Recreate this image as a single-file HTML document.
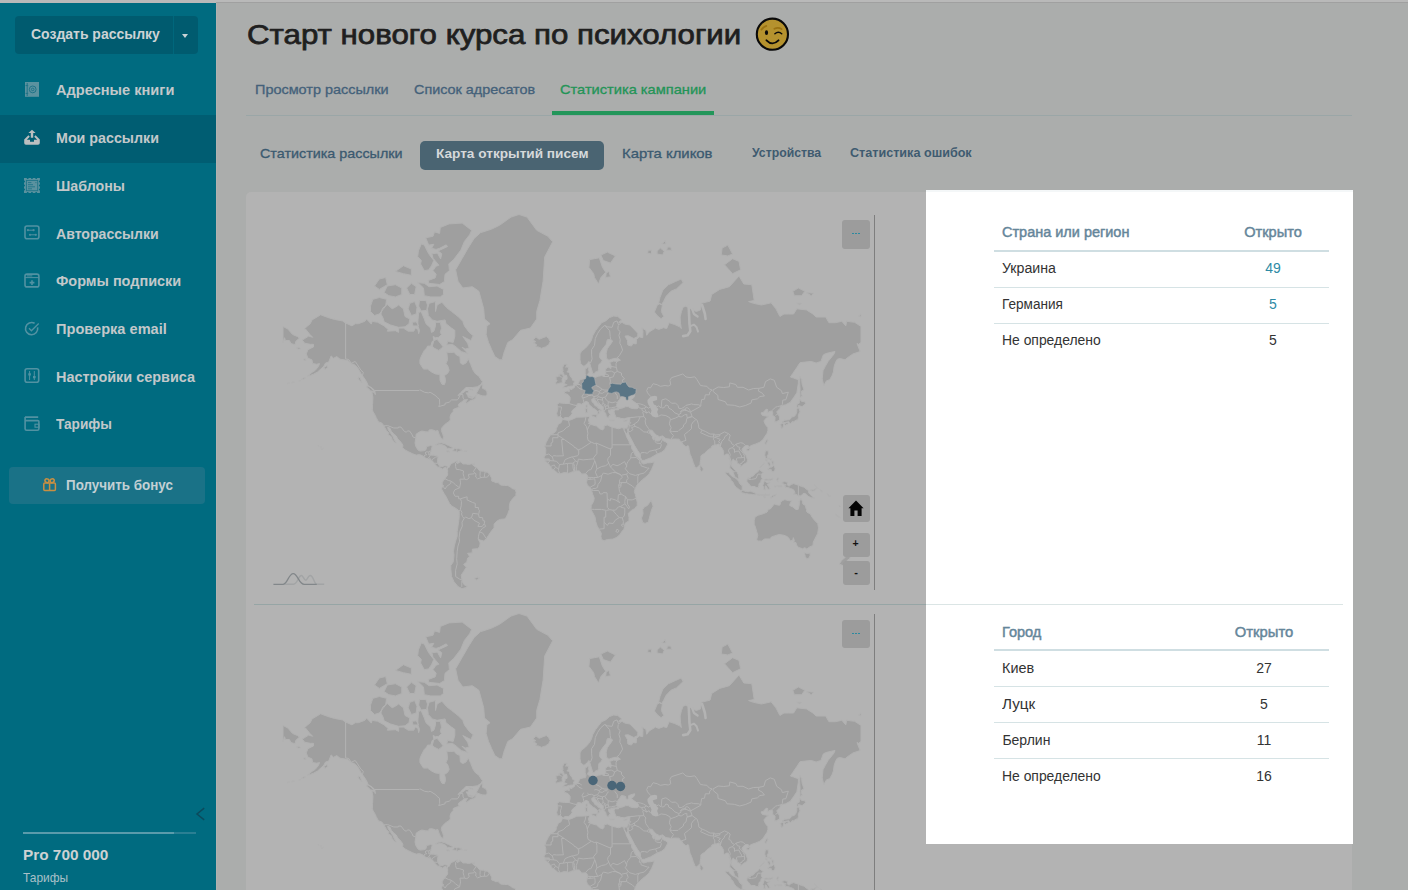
<!DOCTYPE html>
<html lang="ru">
<head>
<meta charset="utf-8">
<title>Старт нового курса по психологии</title>
<style>
*{box-sizing:border-box;margin:0;padding:0}
html,body{width:1408px;height:890px;overflow:hidden}
body{background:#abadac;font-family:"Liberation Sans",sans-serif;position:relative;color:#222}
.abs{position:absolute;white-space:nowrap}
.t{position:absolute;white-space:nowrap;line-height:1;transform-origin:0 50%}
.b{font-weight:bold}
#topstrip{left:0;top:0;width:1408px;height:3px;background:#b9b9b9}
#topline{left:216px;top:2px;width:1192px;height:1px;background:#a0a0a0}
#side{left:0;top:3px;width:216px;height:887px;background:#006b80}
#create{left:15px;top:16px;width:183px;height:38px;background:#005b6f;border-radius:4px}
#create .sep{position:absolute;left:158px;top:0;width:1px;height:38px;background:#00677c}
#create .caret{position:absolute;left:167px;top:18px;width:0;height:0;border-left:3.5px solid transparent;border-right:3.5px solid transparent;border-top:4px solid #c9d3d6}
.act{left:0;top:115px;width:216px;height:48px;background:#005d72}
.ml{font-weight:bold;font-size:15px;color:#c3c8ca;left:56px}
.ic{position:absolute;left:23px;width:18px;height:18px;overflow:visible}
#bonus{left:9px;top:467px;width:196px;height:37px;background:#1a7287;border-radius:4px}
#card{left:246px;top:192px;width:1106px;height:710px;background:#b3b3b3;border-radius:5px}
#white{left:926px;top:190px;width:427px;height:654px;background:#fff;border-top:2px solid #f4f7f8}
.hl{position:absolute;height:1px;background:#d6e3e5}
.th{color:#65869a;font-size:14px;-webkit-text-stroke:.45px #65869a}
.td{color:#333;font-size:14px}
.num{position:absolute;white-space:nowrap;line-height:1;font-size:14px;transform:translate(-50%,0)}
.mbtn{position:absolute;background:#9c9c9c;border-radius:3px}
.tab{font-size:13px;color:#44617a;-webkit-text-stroke:.3px #44617a}
.sub{font-size:13px;color:#3b5a70;-webkit-text-stroke:.3px #3b5a70}
.sub2{font-size:12.5px;font-weight:bold;color:#3f5b70}
</style>
</head>
<body>
<div id="side" class="abs"></div>
<div id="topstrip" class="abs"></div><div id="topline" class="abs"></div><div class="abs" style="left:216px;top:3px;width:1px;height:887px;background:#b0b2b1"></div>

<!-- sidebar -->
<div id="create" class="abs"><div class="sep"></div><div class="caret"></div></div>
<span class="t b" style="left:30.5px;top:26px;font-size:15px;color:#cdd3d5;transform:scaleX(.932)">Создать рассылку</span>
<div class="abs act"></div>
<div id="bonus" class="abs"></div>
<span class="t ml" style="top:81.5px;transform:scaleX(.973)">Адресные книги</span>
<span class="t ml" style="top:129.5px;transform:scaleX(.951)">Мои рассылки</span>
<span class="t ml" style="top:177.5px;transform:scaleX(.949)">Шаблоны</span>
<span class="t ml" style="top:225.5px;transform:scaleX(.939)">Авторассылки</span>
<span class="t ml" style="top:272.5px;transform:scaleX(.964)">Формы подписки</span>
<span class="t ml" style="top:320.5px;transform:scaleX(.972)">Проверка email</span>
<span class="t ml" style="top:368.5px;transform:scaleX(.963)">Настройки сервиса</span>
<span class="t ml" style="top:415.5px;transform:scaleX(.909)">Тарифы</span>
<svg class="abs" style="left:0;top:0" width="216" height="520" viewBox="0 0 216 520">
<!-- address book -->
<rect x="25" y="82" width="14" height="14.8" fill="#5b929f"/>
<g fill="none" stroke="#1f7488" stroke-width="1"><circle cx="32.7" cy="89.4" r="3.4"/><circle cx="32.7" cy="89.4" r="1.3"/><path d="M27.2 83v13M25.6 85.6h2.6M25.6 93.4h2.6"/></g>
<!-- upload tray -->
<path fill="#bcbfc0" d="M24.2 139.4 28.4 135.3 29.8 136.7 26.8 139.8H30V141.8H34V139.8H37.2L34.2 136.7 35.6 135.3 39.8 139.4V143Q39.8 144.8 38 144.8H26Q24.2 144.8 24.2 143ZM32 129.8 35.6 133.1H33.2V137.8H30.8V133.1H28.4Z"/>
<!-- template stamp -->
<path fill="#5b929f" d="M24 178.1h2.7a1 1 0 0 0 2 0h2.25a1 1 0 0 0 2 0h2.25a1 1 0 0 0 2 0h2.7v2.5a1 1 0 0 0 0 2v1.9a1 1 0 0 0 0 2v1.9a1 1 0 0 0 0 2v2.5h-2.7a1 1 0 0 0-2 0h-2.25a1 1 0 0 0-2 0h-2.25a1 1 0 0 0-2 0H24v-2.5a1 1 0 0 0 0-2v-1.9a1 1 0 0 0 0-2v-1.9a1 1 0 0 0 0-2z"/>
<g fill="none" stroke="#1f7488" stroke-width=".9"><rect x="26.4" y="180.4" width="11.3" height="10.3"/><path d="M28 182.6h3.4M35.4 182.6h1M28 184.7h5M28 186.8h7M28 188.8h4"/></g>
<g fill="none" stroke="#5292a2" stroke-width="1.6">
<!-- auto -->
<rect x="25" y="226" width="13.9" height="12.8" rx="2"/>
<path stroke-width="1" d="M28.3 230.2h5M30.4 234.8h5"/><g fill="#4f8d9d" stroke="none"><circle cx="27.9" cy="230.2" r="1.1"/><circle cx="33.6" cy="230.2" r="1.1"/><circle cx="30" cy="234.8" r="1.1"/><circle cx="35.8" cy="234.8" r="1.1"/></g>
<!-- forms -->
<rect x="25" y="274.1" width="13.9" height="12.8" rx="2"/><path stroke-width="1" d="M25 277.6h14M26.8 275.9h5.5"/><path stroke-width="1.6" d="M32 280.2v4.8M29.6 282.6h4.8"/>
<!-- check -->
<path d="M37.6 327.4A6.1 6.1 0 1 1 34.6 323.3"/><path stroke-width="1.3" d="M29 328.2l2.4 2.5 7.3-7.2"/>
<!-- settings -->
<rect x="25.1" y="368.7" width="13.6" height="13.5" rx="2"/><path stroke-width="1" d="M29.6 371v9M34.3 371v9"/><path stroke-width="2.6" d="M29.6 373.2v2.2M34.3 376v2.2"/>
<!-- wallet -->
<path d="M25 417.1h13.2M25.1 417v11.8a1.5 1.5 0 0 0 1.5 1.5h10.800000000000001a1.5 1.5 0 0 0 1.5-1.5v-7.200000000000003a1 1 0 0 0-1-1H25.1"/><rect x="35" y="424.2" width="4" height="3" stroke-width="1.1"/>
</g>
<!-- gift -->
<g fill="none" stroke="#c98f42" stroke-width="1.5"><rect x="43.8" y="483.1" width="11.6" height="7.3" rx="1"/><path d="M49.6 483.2v7.2"/><ellipse cx="47" cy="480.7" rx="2.1" ry="1.8" transform="rotate(35 47 480.7)"/><ellipse cx="52.2" cy="480.7" rx="2.1" ry="1.8" transform="rotate(-35 52.2 480.7)"/></g>
</svg>

<span class="t b" style="left:65.6px;top:478px;font-size:14px;color:#c3d0d4;transform:scaleX(.957)">Получить бонус</span>

<div class="abs" style="left:23px;top:832px;width:173px;height:2px;background:#2a7f93"></div>
<div class="abs" style="left:23px;top:832px;width:151px;height:2px;background:#5a9bab"></div>
<span class="t b" style="left:23px;top:846.5px;font-size:15px;color:#cdd2d3;transform:scaleX(1.023)">Pro 700 000</span>
<span class="t" style="left:23px;top:871px;font-size:13px;color:#a9c0c8;transform:scaleX(.917)">Тарифы</span>
<svg class="abs" style="left:194px;top:806px" width="14" height="16" viewBox="0 0 14 16"><path d="M10.2 2.2 3 8l7.2 5.8" fill="none" stroke="#0b4a5c" stroke-width="1.5"/></svg>

<!-- main header -->
<span class="t" id="title" style="left:247.4px;top:20.8px;font-size:28px;color:#1f1f1f;-webkit-text-stroke:.75px #1f1f1f;transform:scaleX(1.116)">Старт нового курса по психологии</span>
<svg class="abs" style="left:754px;top:16px" width="38" height="38" viewBox="754 16 38 38"><circle cx="772.4" cy="34.2" r="15.6" fill="#b5922e" stroke="#0a0a0a" stroke-width="2.1"/><ellipse cx="766.5" cy="32.7" rx="1.6" ry="2.4" fill="#0a0a0a"/><g fill="none" stroke-linecap="round"><path d="M761.4 29.6Q763.6 26.8 766.4 25.9M774.4 28.8Q778.1 26.6 781.7 29.1" stroke="#9a7212" stroke-width="1.7"/><path d="M774.9 33.8Q778.4 30.6 781.7 33.8" stroke="#0a0a0a" stroke-width="1.5"/><path d="M766.5 40.3Q772.4 46.4 778.5 40.3" stroke="#0a0a0a" stroke-width="1.9"/></g></svg>

<span class="t tab" style="left:254.9px;top:82.7px;transform:scaleX(1.111)">Просмотр рассылки</span>
<span class="t tab" style="left:413.7px;top:82.7px;transform:scaleX(1.106)">Список адресатов</span>
<span class="t tab" style="left:560px;top:82.7px;color:#239457;-webkit-text-stroke:.3px #239457;transform:scaleX(1.125)">Статистика кампании</span>
<div class="abs" style="left:246px;top:115px;width:1106px;height:1px;background:#9aa6a7"></div>
<div class="abs" style="left:552px;top:111px;width:162px;height:4px;background:#23965a"></div>

<span class="t sub" style="left:259.9px;top:147.1px;transform:scaleX(1.103)">Статистика рассылки</span>
<div class="abs" style="left:420px;top:141px;width:184px;height:29px;background:#4a6472;border-radius:5px"></div>
<span class="t b" style="left:435.8px;top:147.3px;font-size:13px;color:#d6d9db;transform:scaleX(1.048)">Карта открытий писем</span>
<span class="t sub" style="left:621.6px;top:147.1px;transform:scaleX(1.145)">Карта кликов</span>
<span class="t sub2" style="left:752.3px;top:146.5px;transform:scaleX(.98)">Устройства</span>
<span class="t sub2" style="left:850.4px;top:146.5px;transform:scaleX(1.008)">Статистика ошибок</span>

<!-- card -->
<div id="card" class="abs"></div>
<div id="white" class="abs"></div>

<!-- MAPS -->
<svg width="0" height="0" style="position:absolute"><defs><g id="world"><path fill="#9f9f9f" stroke="#b1b1b1" stroke-width="1" stroke-linejoin="round" d="M48.2,126.1 54.7,122.1 58.7,123.3 55.5,120.1 51.5,115 50.2,114.8 56.3,109.7 58,105.9 66.7,100.8 73.9,103.5 80.4,105.4 88.4,106.9 91.6,109 98,111.9 101.2,109.7 104.4,109.7 110.9,107.3 112.5,105 117.3,110.1 118.1,107.3 123.7,108.3 130.1,111.9 134.1,115.4 133.3,117.2 141.4,116.7 144.6,118.4 144.6,114.1 149.4,114.1 154.2,117.2 159.8,117.2 161.4,114.1 163.9,115.4 164.7,119.7 165.5,116.3 163.9,111.9 163.9,107.3 164.7,98.5 167.1,97.5 170.3,105 171.9,109.7 174.3,111.9 176.7,114.1 177.5,118.4 179.9,117.2 181.5,111.9 181.5,108.3 186.3,108.3 187.5,114.1 186.3,118.4 187.5,120.5 184.7,123.3 181.5,123.7 179.1,122.5 179.9,126.5 178.3,127.3 176.7,132.1 173.5,132.1 172.7,134 170.3,136.4 167.1,142.6 165.9,145.8 165.9,149.6 169.5,155.1 173.5,155.1 177.5,158 181.5,160 185.9,160.5 186,166.3 187.9,170.2 190.3,170.7 191.5,167.6 191.1,163.6 190.3,161.6 193.6,159.4 195.2,156.5 193.9,152.1 192,149.6 193.6,145.8 192.8,138.2 196.8,138.5 200,138.2 202.4,140.9 205.9,142.6 206.4,149 208.8,150.6 212,149 214.4,144.9 216.8,150.6 219.2,156.5 221.7,160 224.9,162.2 226.5,164.9 228.4,167.6 227.3,170.2 223.3,172.8 218.4,173.5 212,173.5 209.6,175.8 206.4,178.9 204,181.5 207.2,180.1 212,176.5 214.4,176.5 214.4,178.9 212,178.9 213.6,181.3 214.4,183.2 216.8,184.1 219.2,184.3 221.7,181.8 221.7,184.1 219.7,185.5 216,186.8 212.8,189.3 211.7,188.2 213.6,185.5 210.4,185.9 207.2,188.2 204.8,189.9 204.3,191.9 205.6,193.2 203.2,193.8 199.2,195.5 199.2,197.4 197.1,199.9 196,203 196.4,206 194.4,207.9 191.1,210.2 187.9,213.7 187.3,216.5 188.7,220.1 189.5,222.8 189.1,225.2 187.6,225 186.3,222.8 185,220.1 183.9,216.5 181.5,217 178.3,215.7 175.1,215.9 174.6,217.9 171.9,217.8 167.9,217 165.5,217.9 162.2,220.1 161.8,223.7 161,229 161.8,232.5 163.9,235.9 165.9,237.1 169.5,236.8 171.9,235.9 172.7,232.5 176.7,231.5 178.3,232 177.5,235.1 176.7,237.6 175.9,241 179.9,241.3 183.1,241.8 184.2,242.6 183.4,246.8 183.8,249.2 185.5,252 187.9,252.8 190.3,251.7 192.8,252 193.9,253.3 193.1,254.9 192,253.3 189.5,254.1 188.7,255.2 186.3,253.8 183.9,253.3 181.5,250.9 179.9,248.7 177.5,245.9 175.1,245.1 171.9,244.3 168.7,241.8 165.5,240.6 162.2,241.1 158.2,239.6 154.2,237.6 151,235.9 148.6,233.7 148.9,231.1 147,228.2 143.8,225 142.2,221.9 139.8,220.1 137.4,217.4 135.8,214 133.7,213.1 134.1,215.5 136.6,219.2 139,222.8 140.6,226.4 142.2,228.7 141.1,229 138.2,225.5 137.4,222.8 134.1,220.5 134.9,219.2 132.5,216.5 130.9,213.7 129.8,211.6 127.7,208.9 124.5,207.9 122.1,203.4 121.3,201.4 119.2,197.9 118.4,195.8 118.6,190.4 118.9,183.2 117.8,177.9 120.5,178.4 121.3,180.6 120.8,176.5 118.1,174 114.1,171.5 112.5,167.6 109.3,162.8 106.9,159.4 103.6,153.6 100.4,150.6 97.2,149.6 94,146.5 90,145.8 86,145.2 82.8,142.6 79.6,144.2 77.1,141.9 74.7,148.1 71.5,149 69.9,152.1 66.7,155.1 63.5,158 59.5,160.2 56.3,161.4 53.4,162.2 57.9,158.5 61.1,156.5 64.3,152.7 65.6,149.6 62.7,150.2 58.7,149.6 57.9,145.8 53.9,144.2 52.3,139.9 53.9,135.7 59.5,132.9 59.5,130.3 56.3,130.3 50.7,129.2ZM201.6,55.8 208,44.7 214.1,34.1 220.1,24.5 226.5,18.7 237.7,15.1 245.7,11.2 257,3.1 265,0.5 273,3.1 282.7,16.3 293.9,22.3 298.7,27.8 290.7,42.9 289.1,67.2 285.9,86.5 282.7,97.5 282.7,105 276.3,114.1 266.6,116.3 258.6,125.7 253.8,128.4 249.8,139.2 248.2,145.8 245.7,145.8 240.9,142.6 237.7,135.7 234.5,128.4 232.1,120.5 232.9,111.9 236.1,109.7 230.5,105 229.7,94.8 224.9,77.3 218.4,72.7 208.8,74 204,67.2ZM213.6,139.6 207.2,137.5 202.4,133.2 198.4,130.3 192.8,131 193.6,127.3 199.2,128.4 200.8,122.5 200.8,116.3 197.6,114.1 192,109.7 191.1,105.9 183.1,107.3 178.3,105.9 174.3,101.5 173.5,94.8 175.1,89.3 181.5,87.6 181.5,97.5 183.1,91 187.9,88.2 192.8,93.8 197.6,97.5 204,102.5 208.8,107.3 210.4,111.9 215.2,118.4 219.2,121.7 216.8,126.5 212.8,124.5 208.8,122.5 213.6,129.2 215.2,134 211.2,135 208,133.2 212,137.5ZM130.1,107.8 136.6,111 144.6,113.3 151,112.8 155,109.7 155.8,105 151,102.5 149.4,94.8 144.6,91 141.4,93.2 138.2,94.8 133.3,90.5 128.5,94.3 126.9,100 129.3,104.5ZM116.5,97.5 120.5,101.5 125.3,100 131.7,92.1 132.5,85.3 125.3,83.5 118.9,85.3 116.5,92.1ZM189.5,80.5 186.3,82.9 176.7,82.9 170.3,81.7 169.5,74 163.9,68.6 170.3,69.3 175.1,72.7 183.1,72 189.5,75.4ZM147.8,80.5 141.4,82.9 134.9,81.7 130.1,78.6 133.3,72 141.4,70.7 147.8,74ZM160.6,80.5 155.8,80.5 152.6,74 157.4,69.3 162.2,72.7ZM162.2,100 157.4,101.5 154.2,94.8 155.8,89.3 160.6,87.6 163,93.2ZM172.7,96.4 167.1,96.9 164.7,92.1 165.5,86.5 171.9,86.5 173.5,91ZM164.7,111.9 159,111.9 158.2,108.3 162.2,107.8ZM189.2,132.9 184.7,136.4 179.9,134 178.3,132.1 179.9,126.5 183.1,125.3 186.3,129.2ZM133.3,70.7 125.3,75.4 120.5,72 125.3,65 131.7,63.5ZM157.4,61.3 149.4,59.7 141.4,57.4 149.4,51.7 157.4,55ZM222.8,179.9 228.1,181.8 231.3,182 233.2,180.6 232.9,177.7 231.3,175.5 228.4,174.3 228.9,170.2 226.5,171.5 224.4,175.8 222.8,178.4ZM120,177.9 116.5,176.7 112,172.5 114.1,172 117.3,174 119.2,176.5ZM107.7,168.9 104.4,164.9 104.8,163.3 106.4,164.1ZM181.5,231.1 184.7,229.2 187.9,228.9 191.1,229.9 194.4,231.5 197.6,233 198.9,233.9 196.8,234.4 193.2,234.4 192,232.5 188.7,230.8 186.3,230.3 183.1,231.1ZM198.5,236.9 200.8,234.4 204,234.6 207.2,235.4 208.2,236.6 205.6,237.1 203.2,238.1 201.6,237.3ZM192.3,237.1 194.4,236.8 195.6,237.6 193.6,237.9ZM210.1,236.9 212.5,236.9 212.3,237.6 210.1,237.6ZM69.9,153.6 73.1,151.5 73.6,153.6 71,155.4ZM42.3,134 45,133.2 47,135 44.2,135ZM49.4,145.2 51.5,144.9 51.9,146.2 50.2,146.5ZM214.4,174.3 218.4,175.5 218.9,176.2 216,175.8ZM214.8,182 218.4,182.7 217.6,183.6 215.2,182.9ZM51.5,164.1 49,165.5 47.4,165.5 49.8,163.8ZM46.6,166.8 45,167.1 45.8,166ZM40.2,168.4 37.8,168.7 38.6,167.9ZM35.4,169.4 33,169.7 34.1,168.9ZM193.9,253.3 194.7,254.1 196.8,250 198.4,249.2 201.6,247.6 203.2,246.9 203.2,249.2 203.2,249.6 205.6,248.4 205.6,247.3 208,248.9 208.8,250 212,249.9 214.4,250.5 218.4,249.7 218.8,250.9 220.4,252.5 221.7,253.3 223.3,254.1 225.7,256.9 229.7,257.3 233.7,258.5 235.3,259.9 237.7,264.1 237.7,267 240.1,267.8 240.9,268.6 244.1,268.6 246.5,271 250.6,271.5 253.8,271.5 256.2,272.9 258.6,274.7 261.3,275.5 262.1,278.3 261.8,281.5 258.6,284.8 256.2,288.1 255.4,291.4 255.4,295.5 253.8,299.8 252.2,303.2 250.6,305 246.5,305.3 243.3,306.7 240.1,309.9 240,313.9 237.7,316.6 234.5,321.3 232.1,325.1 229.7,326.9 226.5,326.1 224.2,325.1 226.2,329 225.5,333.1 223.3,334.7 218.4,335.1 218.1,338.9 213.6,339.3 215.6,342.5 213.6,344.1 212.8,348.1 209.6,350.4 212.3,353.2 209.6,357.5 207.2,361.2 208,365.9 208.3,367.7 210.4,371 213.3,372.4 211.2,373.8 208,374.6 204,372.6 200,367.7 197.6,362.5 196.8,355.1 196.8,351.5 199.2,348.1 200,341.4 199.5,337.2 200.3,332 201.6,327.1 203.2,322.2 203.2,317.5 204,312.1 204.8,306.7 205.3,301.5 205.1,296.9 202.4,294.7 197.6,291.9 195.5,289.4 194,286.4 192.3,283.1 190.3,279.9 188.7,277.1 187.5,275 187.9,273.4 189.5,272.3 189.1,271 188.1,270.5 188.3,268.6 189.5,266.2 191.1,264.9 192,263 193.6,261.4 193.6,258.2 193.6,255.7 193.1,254.9ZM220.1,364.6 223.3,363.3 225.2,364.3 222.5,365.9ZM218.6,250.7 220.1,249.6 220.2,250.7ZM308.5,205.4 314.8,206.5 318,205.4 322.8,203.2 330.8,203 334.1,202.4 335.7,203 334.4,206 335.3,208.9 334.4,209.5 336.5,210.4 338.9,211 342.6,212.1 345.3,214.6 348.5,215.9 350.1,214.6 350.1,211.8 353.3,211 358.1,213.3 361.4,214 364.6,214.8 367.8,213.7 369.9,214.2 370.2,216.5 371.8,220.1 372.6,222.8 375,227.3 375.3,229 377.4,231.6 377.9,235.1 379.8,237.6 381.4,241.8 383.8,243.5 387,246.4 387.5,248.4 389.5,250 393.5,248.9 396.7,248.7 400.2,247.9 399.9,250 397.5,255.7 395.1,259.8 391.9,263 388.7,265.4 385.4,268.6 383,271 381.4,274.2 380.3,277.5 381.4,280.7 382.2,284 383.2,288.1 383.2,291.4 380.6,294.7 377.4,296.4 374.2,299.4 375,303.2 375,306.7 371,309.4 370.7,312.1 369.9,315.3 367.8,317.5 366.2,320.3 363,323.2 358.9,325.1 353.3,325.5 350.1,326.7 347.5,325.5 346.9,322.2 347.4,319.4 345.3,315.7 343.2,312.1 341.8,307.6 341.1,303.2 338.9,298.9 336.9,295.5 337.3,291.4 339.7,287.2 340.2,284 338.9,280.7 337.6,276.7 336.9,274.2 333.3,271 332.5,268.1 333.3,265.4 333.7,262.2 332.1,259.8 329.2,259.9 327.6,260.1 326,257.7 325.2,256.9 322,256.9 319.6,257.5 316.4,258.6 314.8,259.3 313.2,258.8 310,258.6 306,259.9 303.5,259 300.3,256.2 297.9,254.9 296.6,252.5 294.7,250 293.9,249.2 291.2,247.1 291,245.1 289.9,243.1 291.5,241 291.8,237.6 291.8,235.1 290.7,232.5 292.3,228.2 294.2,224.6 296.3,221 298.7,219.8 301.9,217.4 302.4,214.6 304.4,210.2 307.1,208.7ZM397.2,286.4 399.1,292.2 398,294.7 396.7,298.9 394.3,308.1 391.1,309.4 388.7,308.5 387.5,304.1 389.1,299.8 388.7,295.5 390.3,293 393.5,291.4 395.9,288.1ZM303.5,203 302.7,199.5 303.9,194.7 303.2,190.4 305.2,188.8 310.8,189.5 315.1,189.5 316.1,185.9 316.1,183.2 314,180.6 310.8,179.4 310.3,177.7 313.2,177 315.4,177.5 315.1,174.8 318,175.5 318.3,174.8 320.4,173.5 320.9,171.5 323.6,170.5 325.2,167.6 326,165.7 329.2,164.9 331.6,164.7 332.1,162.2 331.2,159.4 331.2,155.1 333.7,153.6 335,153 334.5,156.5 335.3,158 333.7,160.2 333.7,161.4 335.7,162.8 338.1,162.5 340.5,163.6 344.5,162.2 347.7,161.6 349.8,162.5 351.7,160 351.7,155.1 354.1,153 357,154.5 357,151.2 355.7,148.4 359.7,147.1 363,147.4 366.5,146.2 363.8,144.2 359.7,144.5 354.9,146.2 352.5,144.2 352.2,139.2 353.3,134.7 357.3,129.2 358.6,126.9 356.5,125.3 353.3,125.7 352.2,130.3 348.5,135 345.8,139.2 345.6,143.6 348.2,146.5 346.9,149 344.8,150.6 344.5,155.7 343.7,157.4 341.3,158 340.8,159.7 338.9,159.7 338.1,157.1 336.5,152.1 335.7,149 334.9,147.4 333.3,149.6 330.8,151.8 329.2,152.1 326.8,149.6 326,145.8 326,139.9 327.6,137.1 331.6,134 334.9,130.3 337.3,126.5 338.9,121.3 341.8,116.3 344.5,112.8 347.7,108.7 351.7,106.9 355.7,103.5 359.7,102 363.8,102.5 367.8,105.9 364.6,108.3 368.6,108.7 371,110.1 375.8,111 379.8,115 383.8,119.3 383.8,122.5 379.8,124.5 374.2,121.7 371,122.1 373.4,126.5 373.9,131 377.4,132.1 379,129.5 382.2,129.9 382.5,125.3 385.4,122.9 388.7,123.7 389,117.2 387.8,114.1 391.9,116.3 392.7,121.3 395.1,118 401.5,114.1 404.7,115.4 409.5,113.7 412.7,114.6 415.1,108.7 420.8,110.6 425.6,112.8 427.3,114.6 426.5,109.2 426.1,103 427.5,97.5 429.1,93.2 431.4,92.4 434.4,93.2 438.4,95.9 442.4,97.5 446.5,95.9 447.3,89.3 456.1,87.1 457.7,80.5 465.7,75.4 475.4,72.7 485,62 489.8,70 497.8,70.7 500.2,86.5 494.6,87.6 499.4,89.3 507.5,91 517.1,88.8 521.9,94.8 525.9,102.5 530,100 534.8,100 539.6,100 542.8,94.8 552.4,95.9 558.9,100 562.1,103 571.7,103 574.9,108.7 581.3,108.7 587.8,107.3 591.8,111.9 592.6,107.3 600.6,108.3 607,112.4 607,128.4 604.6,130.3 603,129.5 605.4,135.7 606.2,137.5 599,139.9 594.2,143.2 591,145.8 586.2,144.5 583.3,145.2 581.7,148.1 580.2,152.1 579.4,158 578.1,161.4 575.7,165.7 572.5,166.8 569.8,171.5 568.2,164.9 569,156.8 571.4,152.1 574.3,147.1 577.8,142.9 580.1,139.9 581,137.5 577.3,138.2 571.7,139.6 569.3,140.9 566.9,147.4 562.1,149 557.2,147.4 550.8,148.1 546,148.7 542.8,153.6 538.8,159.4 536.4,163 539.6,164.1 544.4,165.7 544.4,168.9 543.6,174 542.8,178.9 539.6,183.6 536.4,188.2 531.6,190.8 528.3,191.5 526.7,191.9 525.9,194.7 523.5,196.8 522.7,197.9 525.6,203 525.6,206 522.7,207.5 520.8,207.9 521.1,203 518.7,201.4 518.7,197.9 517.6,196.8 514.7,197.9 513.1,198.9 513.9,195.8 512.3,195.1 509.1,198.5 507,198.9 508.3,201.4 511.5,202 514.7,202.4 512.3,204 509.9,206.9 511.5,210.8 513.9,213.7 513.9,216.5 513.1,219.2 510.7,222.8 509.1,225.5 505.9,228.2 501.9,229.9 497,231.6 494.6,233.7 494.3,231.6 491.4,231.6 489,233.7 487.9,235.9 489.8,239.3 492.2,241.8 493.5,245.9 493,248.4 489.8,250.2 486.6,252.8 486.6,250.9 483.4,249.2 482.6,247.3 480.2,246.4 479.4,245.1 478.6,245.6 477.4,249.2 477.4,252 479.1,254.1 481,256.1 483.1,258.2 484.2,260.6 485,264.6 483.9,264.9 480.7,262.5 479.4,259 478.6,256.5 475.8,254.1 476.2,250.9 476.5,247.6 475.4,244.3 474.6,240.1 472.1,240.1 471,241.3 469.4,241 469.7,237.6 468.1,234.2 466.2,232.5 464.9,229.9 462.5,230.8 459.3,231.3 457.7,232.2 457.2,233.9 454.5,235.4 450.5,239.3 446.9,241.8 446.8,245.1 446.1,248.4 446.1,250.4 444.9,252 443.6,252.8 442.4,254.1 440.8,252.5 439.2,248.4 437.6,243.5 436,240.1 435.2,235.9 434.7,232.5 434.1,231.6 432,232.8 428.8,230.3 428,228.2 426.4,227.3 425.1,225.2 420.8,225 416.8,225.3 411.9,224.6 409.8,222.8 408.7,221.9 405.5,222.7 402.3,221 399.9,218.7 398.3,216.5 396.4,215.9 395.1,217.4 395.9,219.2 398.3,222.5 398.6,224.6 399.9,226.2 400.7,223.7 401,226.4 403.1,227.1 405.5,226.8 407.9,223.7 408.6,223.2 408.7,226.4 411.9,228 414,229.9 411.9,233.4 410.6,235.9 407.1,238.5 403.1,240 396.7,243.8 390.3,246.3 387.8,246.4 386.6,243.5 386.2,240.1 383.8,236.8 380.6,231.6 378.2,226.8 375,221 373.9,217.4 373.1,220.5 370.3,216.6 369.9,214.2 372.9,214 374.2,211.2 375.5,207.9 375.8,205 376.1,203.6 373.4,203.8 370.2,204.8 367,204.4 364.6,203.6 362.2,203.4 360.6,199.9 360.1,197.9 360.1,196.8 361.4,195.8 364.6,195.8 364.9,194.5 367.8,194.3 371.8,192.6 374.2,192.6 376.6,194.1 379.8,194.7 383,194.7 384.6,193.6 384.6,191.5 382.2,189.3 379,187 377.4,185.5 379.8,183.6 380.9,180.8 378.2,181.3 374.5,182.7 374.4,185.2 373.1,186.6 371.8,185.2 371.8,183.6 369.4,182.7 367.3,182.5 365.7,185.2 364.2,187 363,189.7 362.5,191.5 363.3,193.6 364.6,194.3 362.2,194.7 360.1,195.3 357.3,194.9 356.2,196.2 354.6,195.8 354.6,197.9 355.3,199.3 356.5,200.9 354.9,202 354.9,204 353.3,203.4 352.2,201.4 351.7,199.3 350.4,197.9 349.3,195.8 349.3,193 347.7,191.5 343.7,189.3 342.1,187 341,185.5 340,186.1 340,184.3 337.8,185.2 337.9,187.7 339.8,189.3 340.8,191.5 343.7,192.8 343.7,193.8 346.9,195.5 347.7,196.6 346.9,197 345.3,196 344.7,197.4 345.5,198.9 344.5,199.9 343.2,200.9 343.5,199.7 343.7,197.9 343,196.8 341.3,195.3 338.9,194.1 336.5,191.7 334.9,190.4 334.4,188.4 332.1,187.3 330,188.6 327.6,190.2 325.2,189.5 323.1,189.9 323.1,191.9 321.2,194.1 318.8,195.8 317.5,197.9 318.3,199.3 316.9,201.4 314.8,203.4 310.8,203.6 309.2,205 307.9,204 306.8,202.6ZM29,112.4 33.8,115 38.6,120.5 43.4,122.5 45.5,124.1 41.8,127.3 41,130.7 37,129.5 35.4,126.5 31.4,126.5 30.6,123.7 29,128.4ZM308.8,173.8 312.4,173.3 315.6,172.3 318.5,172 320.2,171 319.3,170.2 320.7,167.3 318.5,166.3 318.2,164.7 316.1,161.9 315.4,159.4 314.5,158 312.9,158 314,156.5 314.8,153.3 312.4,153 311.6,153.3 313.2,150.2 310,150.2 308.7,153.6 309,157.1 307.9,156.2 309.7,159.4 310.3,161.4 312.4,161.1 313.2,163.6 312.9,165.5 310.8,165.5 311.3,166.8 310.5,168.7 309.7,169.4 312.4,170.5 313.2,170.7 311.1,171.2ZM308.4,168.4 308,165.5 309.2,162.5 308.4,160.2 306.3,160 304.7,160.8 304.4,162.5 301.9,163 302.3,165.5 303.1,166.3 301.6,168.9 302.3,170.2 304.7,169.4 307.6,168.7ZM279,126.1 281.9,122.9 285.1,125.3 289.1,123.7 292.3,122.5 294.6,124.5 296.2,127.6 294.7,130.7 291.5,132.9 287.5,134.3 284.3,132.9 281.6,132.9 282.7,130.7 279.5,128.8 281.9,127.6ZM335.7,45.6 334.9,53.4 339.7,59.7 340.5,63.5 344.5,70 346.9,63.5 351.7,58.2 348.5,53.4 345.3,43.8 340.5,44.7ZM346.9,41 353.3,38.1 361.4,41.9 356.5,49.1 349.3,46.5ZM351.7,63.5 356.5,62.8 354.9,57.4 352.2,59ZM404.7,88.8 406,83.5 408.9,76 414.5,70.7 421.6,67.5 427.2,65 429.1,68.6 422.7,74.7 416.9,77.3 412.1,82.3 409.5,87.6 407.6,90.5ZM400.4,98 403.3,91 405.4,89.9 408.4,91 407.3,97.5 409.8,102.5 407.1,104.7 403.6,102ZM604.9,102 607,100 607,103ZM546,162.8 547.6,165.5 548.1,170.2 550,176 547.6,177 547.3,180.6 548.4,182 546,183.6 546,178.9 546,174 545.7,168.9ZM543.3,193.6 544.7,193 544.4,191.5 548.1,192.6 551.6,189.7 550.8,187.7 547.6,187.5 545.7,185 545.2,189.3 543.3,189.9 542.8,192.1ZM545,194.1 546,197.9 544.4,200.5 544.4,203.4 543.9,205.6 542.8,206.5 542.5,205.8 541.2,206.7 539.9,207.7 538,207.7 537.7,208.3 536.4,209.9 535.1,208.3 534.8,207.7 531.6,208.3 528.3,208.9 528.3,208.1 530.8,206.2 533.2,206 535.6,205.8 537.7,203.4 538.3,202 538,203 540.4,202.4 542,200.3 542.8,197.2 542.8,195.5 543.3,194.3ZM526.7,210.4 528.3,209.3 529.6,210.4 529.1,213.1 528,214.4 527.1,214 527.1,211.8 526.3,210.8ZM530.8,209.5 533.2,208.3 534.3,209.3 533.5,210.2 531.6,211.2 530.6,210.4ZM513.3,225.2 513.7,226.4 512.3,229.9 511.8,230.8 510.8,229 512,226.4ZM492.5,235.4 495.4,234 496.2,234.9 494.6,236.9 492.5,236.6ZM511.5,236.8 514.2,236.8 514.4,240.1 513.1,241.8 513.4,244 517.1,244.6 517.1,246.4 515.5,245.1 513.9,244.6 512,244.6 511.5,243.5 510.7,241 511.2,238.5ZM513.9,254.9 516.3,253.3 517.9,253.1 519.5,251.2 521.1,254.1 520.8,256.5 519.5,257.3 519.2,258 517.4,257 517.1,255.2 514.2,255.9ZM493.3,265.1 494.1,263.8 496.2,264.3 496.9,262.7 499.4,261.9 501.1,259.6 503.5,258.2 505.4,255.7 507,256.9 509.4,258.5 507.8,259.6 507.2,261.4 507.5,263.5 509.1,265.4 507.2,265.7 506.7,268.3 505.1,269.4 504.7,271.8 504.3,273.4 502,273.6 501.1,272.5 497.8,272.5 496.2,271.8 494.9,269.7 493,267.8 493,266.2ZM471,258 474.6,258.6 476.5,261.1 479.1,263 481,263.8 483.4,265.7 484.7,267.5 485.8,269.9 488.2,271.8 488.2,276.3 486.1,276.3 484.2,274.7 482.3,273.4 480.2,271 479.1,268.3 477,266.2 476.2,264.1 473.8,261.7 472.1,260.2ZM486.9,277.9 488.2,276.5 489.8,276.7 492.2,277.6 495.4,277.6 496.2,277.3 499,278.1 501.9,279.6 501.7,280.9 498.6,280.5 494.6,280 491.4,279.6 488.8,278.9ZM510.4,265.7 512,264.9 515.5,265.4 518.7,264.4 518.4,265.6 516.3,266.4 512.3,266.2 511,267 512.3,268.6 516,268.3 514.7,269.7 513.1,270.2 514.7,272.6 515.8,274.2 515,275.5 513.6,274.7 512.3,272.3 511.5,271.8 511.3,275.8 509.9,275.8 509.9,272.6 508.8,271.5 509.6,269.1 510.4,267ZM528.3,268.3 530.8,267.6 533.2,268.3 533.5,271 534.8,272.3 537.2,270.5 539.6,269.6 544.4,271.2 547.6,272.5 550,273.1 552.1,275 554.8,276.7 554.4,277.9 555.6,279.9 558.9,283.1 560.1,284 557.2,283.6 554,282.3 552.4,280.2 550,279.2 548.4,280.4 546.8,281.8 544.4,281.7 541.2,279.9 539.6,280.4 540.9,278.3 539.6,275.8 536.4,274.4 533.2,273.3 531.6,273.4 531.2,272.1 530,271.5 532.4,270.9 530,270.2 528.3,269.2ZM446.1,251.3 447.7,252.5 449.3,254.9 448.9,256.7 447.3,257.5 446.1,255.7 446.1,253.3ZM595.3,325.9 597.9,327.7 599.8,330 600.6,332.2 603.8,332.2 604.3,334.1 602.2,336.1 601.9,337.8 599.5,340.6 598.5,339.9 599,337.2 597.1,335.7 598.4,334.1 598.5,331 595.8,327.1ZM595.3,338.2 597.7,340.4 596.6,342.5 595.5,344.9 593.1,346.5 592.3,349.9 589.4,351.8 587,350.8 585.3,349.9 587.8,346.3 591,343.6 593.4,341 594.5,338.9ZM550.3,338.7 553.2,339.5 556.1,339.1 556,341.9 554.8,344.1 552.8,344.9 551.3,342.5ZM338.1,200.9 343,200.5 342.4,203.6 338.9,202.4 337.9,201.4ZM331.2,194.7 333.4,194.5 333.4,198.5 331.6,198.9 331.5,196.8ZM331.8,191.5 333.1,190.4 333.3,192.6 332.8,193.8 332,193.2ZM355.7,206 360.2,206.3 359.7,206.9 355.9,206.5ZM369.9,206.9 371,206.3 373.4,205.8 372.6,206.9 371,207.7ZM581.3,300.1 585.3,302.9 586.2,303.9 582.9,302ZM501.1,302.9 504.3,301.2 509.1,299.8 513.1,298.1 514.4,295.2 516.3,295 517.9,293 520.3,290 523.5,291 525.9,291.2 526.7,288.1 528.3,286.7 530.8,285.6 534.8,286.7 537.7,286.7 536.4,288.9 535.6,291.4 538.8,293 542,295.5 544.1,295.5 545.2,291.4 545.4,287.7 546.8,284.4 548.4,287.2 548.9,290.2 551.3,291.4 552.4,295.5 552.9,298.1 556.4,300.1 558.1,303.2 560.1,305.8 563.7,309.4 564.5,313.9 563.7,319.4 561.3,324.1 559.3,328 558.9,331.6 555.6,332.9 552.9,335.1 550.8,333.7 548.4,334.7 544.4,333.3 542.5,331 542,328.6 539.6,328.4 540.4,326.7 539.3,323.6 538.8,326.1 536.4,326.9 534.8,324.1 533.2,322.6 530,321.3 525.1,320.5 520.3,321.9 517.1,323.2 516.3,324.9 510.7,324.9 507.5,327.1 504.3,326.9 502.7,325.7 503.8,321.3 502.7,317.5 501.4,313 500.2,310.3 500.2,306.7ZM393.5,39.1 397.5,40 397.5,36.2 394.3,36.2ZM403.1,40 408.7,41 410.3,37.1 406.3,34.1 403.1,37.1ZM412.7,36.2 417.6,36.2 416.8,33.1 413.5,33.1ZM407.9,30 411.9,30 411.1,26.8ZM470.5,50.8 478.6,59.7 486.6,55.8 485,47.4 478.6,44.7ZM467.3,41 473.8,41.9 478.6,40 473.8,31.1 468.1,34.1ZM538.8,77.3 544.4,74 550.8,77.3 547.6,81.7 540.4,81.7ZM552.4,78.6 559.7,79.2 557.2,81.7ZM542.8,89.3 547.6,89.3 546,91ZM517.9,246.8 519.8,247.6 519.5,250.5 518.4,250.5 517.9,248.4ZM513.9,247.9 515.8,248.4 516.3,250.9 515.5,252.3 514.7,251.2 513.9,250ZM506.2,253.5 509.9,250 510.2,248.7 508.3,250.9 506.2,253.1ZM511.5,245.3 513.1,245.6 512.8,247.1 512,246.8ZM502.7,280.2 505.1,280.4 509.1,280.4 511.5,280.4 515.5,280.4 515.2,281.2 510.7,281.2 505.9,281.5 503,281ZM509.1,282.3 512,283 510.7,283.5ZM516.3,283.6 518.7,281.5 522.2,280.5 521.1,281.8 517.9,283.5ZM522.7,265.4 523.5,263.8 524.7,264.6 523.5,266.2 524.2,267.8 523.2,267ZM523.5,271.8 527.5,271.8 528,272.8 524.3,272.6ZM520.3,272.1 522.2,272.3 521.6,273.1ZM556.4,276 558.9,275.8 561.3,274.9 562.5,273.8 562.1,275 560.5,276.7 558.1,277ZM560.1,271.2 562.9,273.1 563.7,274.6 562.1,272.6ZM566.4,275.8 568.2,277.5 567.2,277.6ZM573.3,279.9 576.2,282 574.9,282.3ZM585.3,291.4 586.5,292.5 585.7,292.4ZM67.5,234.7 69.1,234.4 68.3,235.9ZM66.4,232.7 67.5,232.8 66.9,233.2ZM64,231.6 64.8,231.8 64.3,232ZM602.7,295.5 604.6,295.4 604.6,296.7 602.7,296.6ZM605.4,293.9 607,293.5 606.2,294.4ZM186.3,13.5 195.1,9.9 208.2,9.1 217.7,16.4 215.6,20.8 210.4,27.4 206.8,36.2 199.5,45.7 194.8,49.8 195.4,56.6 191.0,60.3 190.4,67.6 185.6,70.5 174.7,69.3 174.4,66.4 181.2,63.9 182.2,60.3 179.0,56.6 182.0,52.2 184.9,51.2 179.0,44.2 177.9,39.8 183.4,39.1 186.6,44.9 187.8,39.8 184.1,36.9 193.6,32.5 192.2,30.8 185.6,34.3 182.0,35.4 177.6,34.3 179.8,30.3 174.7,31.1 171.7,23.8 179.0,22.3 180.5,17.9 185.6,19.4ZM167.3,29.9 170.3,31.1 174.7,39.8 179.8,46.4 177.6,51.5 174.7,55.9 170.3,56.6 166.6,50.0 167.3,46.4 163.7,42.7 164.4,36.9Z"/><path fill="#b3b3b3" d="M393.5,185.9 396.7,182.5 400.7,181.8 403.1,182.5 403.1,185.9 399.9,187 398.8,187.5 399.9,190.4 402.3,191.5 402.8,193.6 404.4,195.1 403.1,197.9 404.4,200.9 404.4,203 401.5,203.6 398.3,202.2 396.7,199.9 397.5,196.2 395.9,193 394.3,190.4 393.5,188.2Z"/><path fill="none" stroke="#b3b3b3" stroke-width="2.6" stroke-linecap="round" stroke-linejoin="round" d="M434.6,92.1 435.1,101 435.5,110.1 436.3,117.2 433.6,121.3 429.1,122.1"/><path fill="none" stroke="#b3b3b3" stroke-width="2.0" stroke-linecap="round" stroke-linejoin="round" d="M435.9,112.4 440,110.6 442.6,113.3 444,117.6"/><path fill="none" stroke="#b3b3b3" stroke-width="2.2" stroke-linecap="round" stroke-linejoin="round" d="M437.8,94.3 440,100 443.6,102.5"/><path fill="none" stroke="#b3b3b3" stroke-width="2.6" stroke-linecap="round" stroke-linejoin="round" d="M448.1,91 450.8,99.5 451.6,105"/><path fill="none" stroke="#b2b2b2" stroke-width="1" stroke-linejoin="round" d="M396.7,182.5 393.5,178.9 392.7,176.5 394.3,173.3 396.4,174 399.1,169.7 403.1,170.7 406.3,172.3 411.1,171.5 414.3,172 416.8,170.7 415.9,166.3 417.6,163.6 424,161.6 428.8,160 432,163 436,163.6 440.8,162.8 442.9,165.5 446.5,171.5 449.7,172 452.9,172.3 455.3,175 458.2,176M402.3,193.2 404.7,191.9 407.1,194.1 407.9,185.9 411.9,184.8 415.9,187.5 417.6,189.3 421.6,189.1 424,191.5 424.8,194.3 427.2,194.7 428.8,193.8 431.2,192.3 432,191.3 436,190.4 437.6,189.9 439.7,190.6 444.9,190.8 446.8,192.1M446.8,192.1 446.9,189.9 447.7,185.5 450.5,185.2 451.3,180.8 455.3,180.8 455.8,177.9 458.2,176M459,176 464.1,173 469.7,173.5 475.4,172.8 475.8,168.9 481.8,170.5 483.4,173.3 489,173.3 494.6,176 499.4,174.5 505.1,174.3 504.3,177 508.3,179.2 510.4,182 505.9,182.5 503.5,184.8 497.8,185.9 497,189.1 491.4,191.5 485.8,193 480.2,191.3 473,190.8 471.3,187.7 464.1,185.5 463.8,181.3 459.3,177.7 459,176M505.1,174.3 509.9,173.3 511.5,167.6 516.3,164.9 520.3,166.3 522.7,173.3 527.5,176.7 528.3,179.6 534.3,178.2 531.9,185.7 528.8,186.1 528.3,190.4 527.7,191.7M527.7,191.7 523.5,192.6 521.6,193.2 517.7,196.8M521.4,201.4 524.2,199.7M491.4,231.6 489,229.2 486.6,228.7 482.1,230.1 480.5,231.6 477.8,229.9 476.8,227.3 474.7,226.4 476.2,221 474.4,219.6 470.5,217.9 465.7,220.5 460.9,221 460.6,220.1 456.1,220.1 451.3,217.4 448.1,216.1 444.9,214.2 444.5,210.8 443.2,206.3 440,204 438.1,202.6 436.5,197.9 440,196 444,193.8 446.8,192.1M427.5,227.8 432,226.4 430.4,220.5 434.4,217.4 437.6,214.6 437.3,210.8 439.2,207.9 441.6,206M438.1,202.6 432.8,204.4 432,208.9 429.6,210.8 429.3,213.1 424.8,216.5 424,217.4 418.4,217.6 415.8,216.6 417.2,219.2 419.5,221.6 417.1,225.2M415.8,216.6 417.2,213.8 415.3,209.9 416.3,205.8 415.9,203.8 411.9,201.6 407.1,200.9 404.5,202.4M416.3,205.8 421.6,204 424.8,202.4 427.2,203 430.4,200.9 432.8,200.3 433,203.6 438.1,202.6M424.8,202.4 424.8,200.5 420.8,198.9 418,195.8 414.7,194.1 414.3,191.9 411.9,191 410.3,193.6 407.9,194.1M424.8,200.5 427.2,199.1 426.4,197.6 430.4,196.4 432,196.4 431.2,194.3 433.1,193.6 435.5,195.3 436.5,197.9M426.4,197.6 429.3,195.3 431.2,195.8 436,198.1M395.9,216.6 394.6,214.6 391.9,210.8 391.1,206.9 391.9,205 389.9,202.6 389.3,200.1 388.7,198.1 389.9,197.4 392.7,199.1 395.1,197.6 396.5,200.1M376.1,203.6 376.9,203.4 379,203.4 383.5,202.8 386.1,202.8 389.9,202.6M384.6,193.6 387.8,194.5 388.2,196.6 389.9,197.4M382.2,189.5 386.2,189.9 389.5,191 392.7,193 394.8,194.3 396,193M387.8,194.5 390.3,194.1 392.7,193M390.3,194.1 391.1,195.5 392.7,199.1M386.1,202.8 384.2,207.3 380.3,210 380.9,212.3 377.4,213.7 379,215.5 376.6,217.4 374.2,217.8M375.2,211.4 377.1,212.1 380.3,210M375.6,207.7 376.8,208.5 375.5,210.2 375.2,211.4 375,213.7 374.2,217.4M374.4,210.6 375.5,210.2M380.9,212.3 385.4,214.2 389.8,217.9 392.7,218.1 394.3,216.5 395.1,216.6M392.7,218.1 394.6,219.2 395.7,219.2M386.7,240.3 387.4,238.6 390.6,238.6 393.5,239.3 395.1,237.3 401.5,235.9 403.3,239.8M401.5,235.9 406.3,234.2 407.4,230.8 406.6,229.6 402.5,229.2 400.9,227.1M406.6,229.6 407.9,226.9 408.4,224.5M372.9,214 374,217.4M466.2,232.5 466.7,230.9 467.8,227.3 470.1,224.8 470.9,222.5 473.8,220.5 474.4,219.6M460.9,231.1 460.7,226.9 459.5,225.7 459.9,223 462.2,223.7 466.4,225.5 464.4,227.8 466.2,229 466.2,232.5M448.1,216.1 446.6,218.7 452.1,221.2 455.8,222.7 459.5,223 459.5,220.3M460.6,221.6 462.2,222.5 465.7,222.1 465.7,220.5M476.3,250.9 477.3,248.1 475.7,242.8 476.3,240.5 474.4,236.8 475.4,234.7 478.7,233.5 480.5,231.6M478.7,233.5 479.4,235.1 480.5,234.9 480.5,238.5 481.9,237.3 485,237.1 486.3,240.1 487.6,242 486.9,243.8 483.4,243.8 482.4,245 483.2,248.1M482.1,230.1 483.4,232.7 486,233.4 485,235.2 486.9,236.6 489.2,239.5 490.8,242.3 490.6,243.1 490.6,246.8 488.2,248.1 488,249.2 485.6,250.2M486.9,243.8 490.6,243.1M478.7,256.7 480.3,257.8 481.9,257M494,263.8 494.6,265.4 497.5,265.4 501.9,264.6 503.9,260.1 506.8,260.2M544.4,271.2 544.4,281.7M336.5,149 338.1,144.9 337.6,140.9 337.6,135.7 340.5,131.4 341.3,124.5 343.7,119.3 346.9,114.6 350.1,111.9 350.9,111.5 355.7,116.7 356.2,122.5 356.7,125.3M350.9,111.5 353.3,112.8 358.1,113.3 359.7,108.3 363,106.9 364.6,111 367.5,108.3M364.2,111.5 363.8,115.4 366.2,117.6 364.9,121.3 366.2,125.7 365.8,129.2 367,131.4 368.6,136.1 365.4,141.6 362.6,144.2M363,147.4 362,149.6 362.2,152.7 363.3,157.4 367.5,159.1 367.5,161.4 370.5,164.9 368.3,166 368.9,168.4M363.3,157.4 360.7,158.8 359.3,162.8 355.7,163.8 356.4,167.1 355.9,170.2M351.7,157.7 357.3,157.1 360.7,158.8M357,152.4 362,153.3M349.8,162.5 354.6,162.5 355.7,163.8M352,160.2 354.6,161.1 354.6,162.5M342.1,171.5 345.1,173 348.2,175.3 350.1,176 354.1,176.2M340.2,177 342.1,176.5 345.1,177.5 348.2,175.3M333.4,180.1 334.9,181.5 337.6,181.3 340,182.5 343.7,181.8 344.5,180.1 345.5,178.9 345.1,177.5M345.5,178.9 348.2,179.4 350.9,177.7 353.6,177.9M343.7,181.8 344.5,182.7 348.2,183.9 350.6,183.2 352,182.7 353.6,179.4 354.8,178.9M360.7,178.2 363.3,181.8 363.3,185M354.4,187.7 358.1,188.8 361.4,187.9 363.9,188.8M350.6,183.2 352.4,186.1 354.4,187.7 354,190.8 354.8,194.1M354.8,194.1 357.3,193.8 360.2,193.2 363,192.6M360.2,193.2 359.9,195.3M350.1,197.4 351.7,194.9 354.8,194.1M340,184.8 342.6,184.8 344.5,182.7M342.6,184.8 343.4,185.5 343.7,187 346.1,190.4 347.7,191.5M343.4,185.5 345.3,185.5 348.5,186.1 349.2,187.7 348.8,189.3 347.7,191.5M348.5,186.1 348.5,183.9M349.2,192.6 350.3,191.3 351.1,192.8 351.7,194.9M350.3,191.3 350.8,190.4 352.7,191.9 354,191.9M351.1,192.8 352.7,191.9M348.8,189.3 350.8,190.4M315.1,189.5 319.1,190.8 323.1,191.7M330,188.6 329.2,185.5 328.9,183.9 327.8,183.2 329.2,180.3 330.2,179.9M328.9,183.9 331.6,183.2 332.9,182.7 334.9,181.5M322,171.2 324.7,174 327.3,175.3 328.3,175.5M323.5,170.5 326,170.5 327.3,172 327.8,172M340,182.5 340,184.3M303.9,192.8 307.6,193 307.1,195.8 306.4,197.9 306.8,200.5 306.1,202.6M306.3,160.5 305.2,162.2 307.9,163.3M314.5,206.7 315.6,211.8 312.4,213.7 309.2,216.8 304,218.9 304,221.4 310.3,225.5 319.9,232.3 319.9,233 323.1,234.6 323.3,235.9 324.7,235.7 327.6,234.6 337.3,228.2 334.1,226.4 333.3,222.8 333.9,219.2 333.3,216.1 332.5,212.7 330,209.3 331.2,206.9 331.8,203.2M304,220.7 296.8,220.7M290.7,232 297.1,232 297.1,229 298.7,228.2 298.7,223.7 304,223.7 304,221.4M310.3,225.5 307.6,225.5 309,240.1 309.5,241.8 302.7,242 299.5,241.6 298.4,243 294.7,240 291.5,241M333.3,216.1 334.5,213.1 336.5,210.4M358.1,213.3 358.1,230.8 358.1,234.2 356.5,234.2 356.5,235.1 342.1,229 340.8,229.7 337.3,228.2M358.1,230.8 377.3,230.8M342.1,229 342.9,232.5 342.9,239.5 339.7,243.5 339.7,244.8M356.5,235.1 356.5,241.5 354.1,244.3 353.6,246.4 354.8,249.2 356.5,253 358.9,250.2 363,251.8 366.2,250.4 370.5,247.6 372.4,251.5 372.6,253.1 372.8,249.9 374.2,247.3 376.3,244.8 376.6,243.8 377.4,239.3 380,237.6M376.6,243.8 382.2,243.5 386.1,246.8M386.1,246.8 385.1,249.2 386.9,249.2M386.9,249.2 387,251.8 393.5,254.1 395.1,254.1 390.3,259 385.4,260.2 381.4,261.4 375.8,259.8 374.2,258.3 372.6,260.2 367.8,261.1 367.5,261.4 362,258.6 358.1,254.6 356.5,253M372.6,253.1 371,254.4 374.2,258.3M383.8,269.7 383.8,267 383.8,262.2 385.4,260.2M380.9,274.6 378.4,272 372.6,268.6 372.6,266.2 374.2,264.3 372.6,260.2M324.7,235.7 324.7,240.1 323.6,241.8 319.6,242.6 318.3,242.8 314.8,244 311.1,245.6 309.2,250.2M323.8,248.1 324.4,245.1 329.2,245.9 334.1,245.4 339.7,244.8 340.8,246.8 339.2,250.9 336.9,255.7 334.9,255.9 331.8,259.3M318.3,242.8 321.7,247.1 323.8,248.1 322.3,252.5 322.3,256.7M318.8,249.2 319.1,254.1 319.9,257.2M319.6,249.2 320.6,252.5 320.6,257M313.5,258.8 313.7,254.1 313.5,251.7 313.3,249.4M309.2,250.2 313.3,249.4 318.8,249.2 321.7,247.1M306,259.9 304.4,256.5 304.7,254.8 305.5,250.5 309.2,250.2M305.5,250.5 304.2,249.2 302.7,247.3 299.5,246.9 298.4,243M296.6,252.5 300.3,250.9 301.5,253.3 299.5,255.9M301.5,253.3 304.7,254.8M299.5,246.9 296,246.6 293.9,249.2M296,246.6 291.2,246.9M291,245 295.5,245 295.5,245.6 291,245.8M340.8,246.8 342.2,250.9 342.9,254.9 347.7,252.5 351.7,251.7 354.8,249.2M342.9,254.9 341.4,258.2 343.7,263.5M333.7,263.3 339.4,263.5 343.7,263.5 347.9,261.4 349.3,259 354.1,260.2 358.6,258.6 362,258.6 365.4,259.9 367.5,261.4 368.3,263.5 365.7,265.7 365.5,269.2M333.7,265.4 336.1,265.4 336.1,263.5M336.1,265.4 340.8,264.8 341.1,267.8 341.1,270.5 336.9,272.8 336,273.4M347.9,261.4 346.6,267 344,270.5 343.5,273.4 341.1,274.6 338.9,274.4 337.6,276.3M365.5,269.2 367,268.6 372.6,268.6M365.5,269.2 364.7,271.2 365,274.1 365.5,277.5 367.3,280.2 364.4,280.7 363.9,286.2 365.8,288.7 361.7,286.1 358.6,285.1 356.5,284.6 356.4,286.7 353.3,285.1 353,278.8 349.3,278.6 348.5,279.9 346.1,280 344.7,276.5 339.2,276.5 337.6,276.3M364.7,271.2 367,270.9 367.5,268.6 367,268.6M365,274.1 367,272.6 367,270.9M353.3,285.1 353.3,288.1 353.3,293.4 355.6,295.7M336.9,295.2 340.3,295.4 347.5,295.4 352.4,296.4 355.6,295.7 358.6,296.1M351.7,296.9 351.7,303.2 350.1,303.2 350.1,308.1 350.1,314.6 345.9,315.1 344.5,315M350.1,308.1 353.3,311.5 354.9,309 359.1,309.5 361.2,306.2 365.2,303.6M358.6,296.1 361.4,296.2 364.4,292.9 366.8,292.4 366.8,293.2 370.8,294.2 370.8,298.9 370.2,302 368.3,303.9 365.2,303.6 362.5,300.6 358.6,296.1M368.3,303.9 369.4,307.6 369.2,310.1 370.8,311.7M369.2,310.1 367.8,310.3 367.5,311.7 369.2,312.4 369.5,311.7M363,315.1 365,316.6 363.8,318.5 361.8,317.5 363,315.1M366.8,292.4 371,289.7 370.8,287.7 371.5,282.3 370.8,282.2 367.3,280.2M371.5,282.3 373.4,285.6 374,285.8 378.2,285.9 382.9,284M373.4,285.6 373.6,290.2 375.5,293 374.7,294.9 373.1,292.7 371,289.7M203.5,247.9 201.6,249.2 201.6,252.5 202.4,255.4 205.6,255.7 209.6,257 209.1,259.8 209.9,262.5 210.4,265.1 205.9,265.2 206.6,268.9 205.6,273.8 201.6,270.9 199.2,268.6 197.1,267.2 194.4,266.4 191.1,264.9M197.1,267.2 196.8,269.4 192.8,272.3 191.1,275 189.1,272.5M205.6,273.8 200.8,275.8 199.3,278.9 201.1,282.3 204.6,282.3 204.6,284.8 206.4,284.8 207.5,287.6 207.2,291.9 206.4,295.2M206.4,284.8 213.1,282.8 213.1,285.9 218.4,288.4 221.3,289.4 221.2,293.5 224.4,293.5 224.4,295.2 225.4,296.4 224.9,299.4 224.5,300.1 218.8,299.3 217.5,303.7 214.8,304.6 211.5,302.9 210.1,304.6 208.5,302.4 207.5,300 208,298.6 206.4,295.5 205.1,296.9M210.1,304.6 208,308.1 208.3,312.1 205.9,317.5 205.1,323.8 205.6,327.1 204,332 203.2,337.2 202.7,344.7 203.2,349.9 201.6,356.3 201.6,362.5 205.6,365.1 208,365.9M207.8,366.9 207.8,372.9M224.5,300.1 225.2,303.4 228.6,303.7 229,306.7 230.8,306.9 230.3,309.5 231.6,312.4 228.4,314.4 225.5,317.9 228.9,319.2 232.1,324.5M217.5,303.7 220.1,306.4 225.5,309.2 223.9,312.4 228.1,312.6 230.3,309.5M225.5,317.9 224.5,322.2 224.2,325.1M210.4,265.1 212.8,265.7 215.2,263.8 214.4,260.4 220.1,259.8 220.5,258.6 219.4,257.5 222,253.6M220.5,258.6 222,259.8 221.7,263 223.6,264.9 226.5,263.8 228.1,263.3 230.3,263.3 233.5,263.1 235,260.4M226.2,257.3 226,261.5 226.5,263.8M231.3,257.7 230.6,260.2 230.3,263.3M91.6,109 91.6,144.9 94.8,145.5 97.2,149.3 101.2,147.4 103.6,150.9 106.9,156.2 109.3,158.3 108.5,161.6M120.8,176.5 165.1,176.5 165.8,175.8 170.3,178.2 174.3,178.9 176.1,178.2 181.8,181.8 183.1,183.4 185.5,185.2 185.7,190.4 184.7,192.6 191.1,190.8 191,189.3 195.2,188.2 197.6,185.9 203.2,185.9 204.3,185 205.6,182 206.9,180.3 208.8,180.6 209.1,184.1 210.4,185.9M130,211.8 133.7,211.6 139.8,214 144.3,214 144.3,213.1 147,213.1 150.2,217.2 152.3,218.3 153.6,216.8 155.8,217.2 158.2,220.9 159,223 161.9,223.9M170,243.5 170.3,242.3 170.8,241 172.7,240.8 171.2,239 171.9,237.9 174.8,237.9 174.8,241 175.9,241.1M174.8,237.9 176.2,236.8M176.4,241.5 174.6,243.5 173.3,244.6M174.6,243.5 177,245.3M177.8,245.9 179.9,244.3 181.8,243 184.4,242.6M180.4,249.1 183.6,249.4M184.9,254 185.4,251.7M193.7,253.1 193.1,255.2M202.9,234.7 202.7,237.4"/></g></defs></svg>
<svg class="abs" style="left:254px;top:214px" width="621" height="376" viewBox="0 0 621 376"><use href="#world"/><path fill="#5a7585" stroke="#b2b2b2" stroke-width="0.6" d="M327.8,172 327.6,169.4 329.2,168.1 329.6,165.5 331.6,164.7 332.1,162.2 331.8,161.1 333.7,161.4 335.7,162.8 338.1,162.5 340.5,163.6 341,166.3 341.6,168.9 342.1,171.5 341,171.5 337.8,173.3 338.1,174.5 340.2,177 338.9,178.2 338.9,180.1 334.9,180.3 333.4,180.1 330.2,179.9 331.2,176.5 328.3,175.5 327.8,173.5ZM353.6,177.9 354.4,175.3 356.5,172.3 355.9,170.2 358.1,169.2 362.2,170 367,170.2 367.8,168.7 371.8,168.1 373.1,170.7 375,173 378.2,173.3 379.8,174.3 382.4,175 381.9,177 381.9,179.2 379.3,181.1 378.2,181.3 374.5,182.7 374.4,185.2 373.1,186.6 371.8,185.2 371.8,183.6 369.4,182.7 367.3,182.5 366.2,182.9 365.5,180.8 364.9,178.9 362.6,177.9 360.6,178.2 357.8,179.4 354.9,178.9Z"/></svg>
<svg class="abs" style="left:254px;top:612.5px" width="621" height="286" viewBox="0 0 621 286"><use href="#world"/><g fill="#4a6678"><circle cx="339.0" cy="167.5" r="4.7"/><circle cx="358.0" cy="172.5" r="4.7"/><circle cx="366.5" cy="173.5" r="4.7"/></g></svg>
<!-- /MAPS -->

<!-- separators -->
<div class="abs" style="left:254px;top:604px;width:672px;height:1px;background:#96a5a5"></div>
<div class="abs" style="left:926px;top:604px;width:417px;height:1px;background:#dbe5e5"></div>
<div class="abs" style="left:874px;top:215px;width:1px;height:375px;background:#7e7e7e"></div>
<div class="abs" style="left:874px;top:614px;width:1px;height:286px;background:#7e7e7e"></div>
<div class="mbtn" style="left:842px;top:220px;width:28px;height:29px"></div><div class="abs" style="left:851.5px;top:233px;width:2px;height:1px;background:#2c8aa0"></div><div class="abs" style="left:854.7px;top:233px;width:2px;height:1px;background:#2c8aa0"></div><div class="abs" style="left:857.9px;top:233px;width:2px;height:1px;background:#2c8aa0"></div><div class="mbtn" style="left:843px;top:495px;width:27px;height:27px"></div><svg class="abs" style="left:848px;top:500px" width="17" height="17" viewBox="848 500 17 17"><path fill="#050505" d="M856 500.6 863.6 508.2H861.6V515.9H857.6V510.4H854.4V515.9H850.4V508.2H848.4Z"/></svg><div class="mbtn" style="left:843px;top:532.5px;width:27px;height:24px"></div><div class="mbtn" style="left:843px;top:561px;width:27px;height:24px"></div><span class="t b" style="left:852.6px;top:538.2px;font-size:10.5px;color:#111">+</span><span class="t b" style="left:854.3px;top:566.5px;font-size:11px;color:#111">-</span><svg class="abs" style="left:270px;top:568px" width="60" height="22" viewBox="270 568 60 22"><g fill="none" stroke-width="1.4"><path stroke="#a2a4a5" d="M285 584.3h8.5c4 0 4.8-8.8 8-8.8 1.8 0 2.4 4.700000000000045 4.2 4.700000000000045s2.4-4.700000000000045 4.4-4.700000000000045c3.4 0 4.2 8.8 6.7 8.8h7.4"/><path stroke="#82878a" stroke-width="1.25" d="M273.4 584.3h9.6c4.6 0 5.6-10.8 10.2-10.8s5.6 10.8 11 10.8h12.6"/></g></svg>
<div class="mbtn" style="left:842px;top:620px;width:28px;height:28px"></div><div class="abs" style="left:851.5px;top:633px;width:2px;height:1px;background:#2c8aa0"></div><div class="abs" style="left:854.7px;top:633px;width:2px;height:1px;background:#2c8aa0"></div><div class="abs" style="left:857.9px;top:633px;width:2px;height:1px;background:#2c8aa0"></div>

<!-- table 1 -->
<span class="t th" style="left:1002.4px;top:225px;transform:scaleX(1.034)">Страна или регион</span>
<span class="num th" style="left:1272.8px;top:225px;transform:translate(-50%,0) scaleX(1.041)">Открыто</span>
<div class="hl" style="left:994px;top:250px;width:335px;height:2px;background:#cfdee2"></div>
<span class="t td" style="left:1002.4px;top:261px;transform:scaleX(1.013)">Украина</span><span class="num" style="left:1273px;top:261px;color:#2e8aa5">49</span>
<div class="hl" style="left:994px;top:287px;width:335px"></div>
<span class="t td" style="left:1002.4px;top:297px;transform:scaleX(.97)">Германия</span><span class="num" style="left:1273px;top:297px;color:#2e8aa5">5</span>
<div class="hl" style="left:994px;top:323px;width:335px"></div>
<span class="t td" style="left:1002.4px;top:333px;transform:scaleX(.993)">Не определено</span><span class="num td" style="left:1273px;top:333px">5</span>

<!-- table 2 -->
<span class="t th" style="left:1002.4px;top:625px;transform:scaleX(1.038)">Город</span>
<span class="num th" style="left:1264px;top:625px;transform:translate(-50%,0) scaleX(1.057)">Открыто</span>
<div class="hl" style="left:994px;top:649px;width:335px;height:2px;background:#cfdee2"></div>
<span class="t td" style="left:1002.4px;top:661px;transform:scaleX(1.03)">Киев</span><span class="num td" style="left:1264px;top:661px">27</span>
<div class="hl" style="left:994px;top:686px;width:335px"></div>
<span class="t td" style="left:1002.4px;top:697px;transform:scaleX(1.088)">Луцк</span><span class="num td" style="left:1264px;top:697px">5</span>
<div class="hl" style="left:994px;top:722px;width:335px"></div>
<span class="t td" style="left:1002.4px;top:733px">Берлин</span><span class="num td" style="left:1264px;top:733px">11</span>
<div class="hl" style="left:994px;top:758px;width:335px"></div>
<span class="t td" style="left:1002.4px;top:769px;transform:scaleX(.993)">Не определено</span><span class="num td" style="left:1264px;top:769px">16</span>

</body>
</html>
